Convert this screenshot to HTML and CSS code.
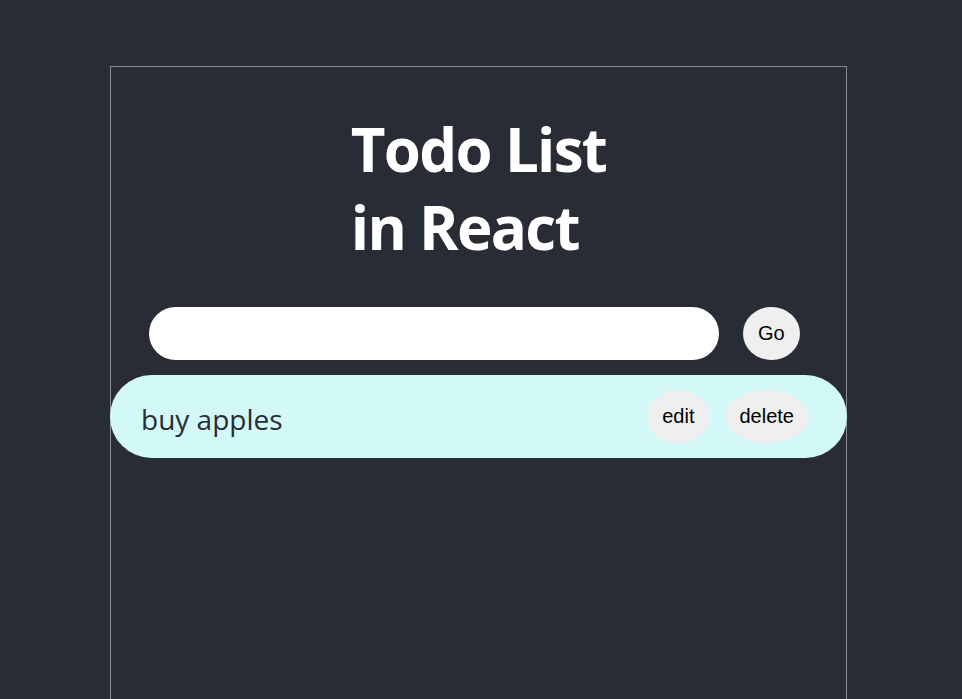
FILE: index.html
```html
<!DOCTYPE html>
<html lang="en">
<head>
<meta charset="utf-8">
<title>Todo List in React</title>
<link rel="stylesheet" href="styles.css">
</head>
<body>
<div class="app">
  <h1 class="title">Todo List<br>in React</h1>
  <form class="todo-form">
    <input class="todo-input" type="text">
    <button class="btn" type="button">Go</button>
  </form>
  <ul class="todo-list">
    <li class="todo-item">
      <span class="todo-text">buy apples</span>
      <div class="todo-actions">
        <button class="btn" type="button">edit</button>
        <button class="btn" type="button">delete</button>
      </div>
    </li>
  </ul>
</div>
</body>
</html>
```
FILE: styles.css
```css
html, body {
  margin: 0;
  padding: 0;
  background: #282c34;
}
body {
  overflow: hidden;
}
.app {
  box-sizing: border-box;
  width: 737px;
  min-height: 700px;
  margin: 66px 0 0 110px;
  border: 1px solid #8a8a8a;
  border-bottom: none;
  display: flex;
  flex-direction: column;
}
.title {
  width: fit-content;
  margin: 43px auto 0 auto;
  font-family: "Open Sans", sans-serif;
  font-weight: 700;
  font-size: 60px;
  line-height: 78px;
  letter-spacing: -1.7px;
  color: #ffffff;
  text-align: left;
}
.todo-form {
  display: flex;
  align-items: center;
  gap: 24px;
  margin: 41px 0 0 0;
  padding-left: 38px;
}
.todo-input {
  box-sizing: border-box;
  width: 570px;
  height: 53px;
  border: none;
  border-radius: 27px;
  background: #ffffff;
  outline: none;
  padding: 0 20px;
  font-size: 20px;
}
.btn {
  border: none;
  border-radius: 50%;
  background: #efefef;
  color: #000000;
  font-family: "Liberation Sans", Arial, sans-serif;
  font-size: 20px;
  line-height: 23px;
  padding: 15px 15px;
  cursor: pointer;
}
.todo-list {
  list-style: none;
  margin: 15px -1px 0 -1px;
  padding: 0;
}
.todo-item {
  box-sizing: border-box;
  height: 83px;
  display: flex;
  align-items: center;
  justify-content: space-between;
  background: #d3f8f8;
  border-radius: 42px;
  padding: 0 38px 0 31px;
}
.todo-text {
  font-family: "Open Sans", sans-serif;
  font-size: 28px;
  color: #282c34;
  margin-top: 4px;
}
.todo-actions {
  display: flex;
  gap: 15px;
}
```
